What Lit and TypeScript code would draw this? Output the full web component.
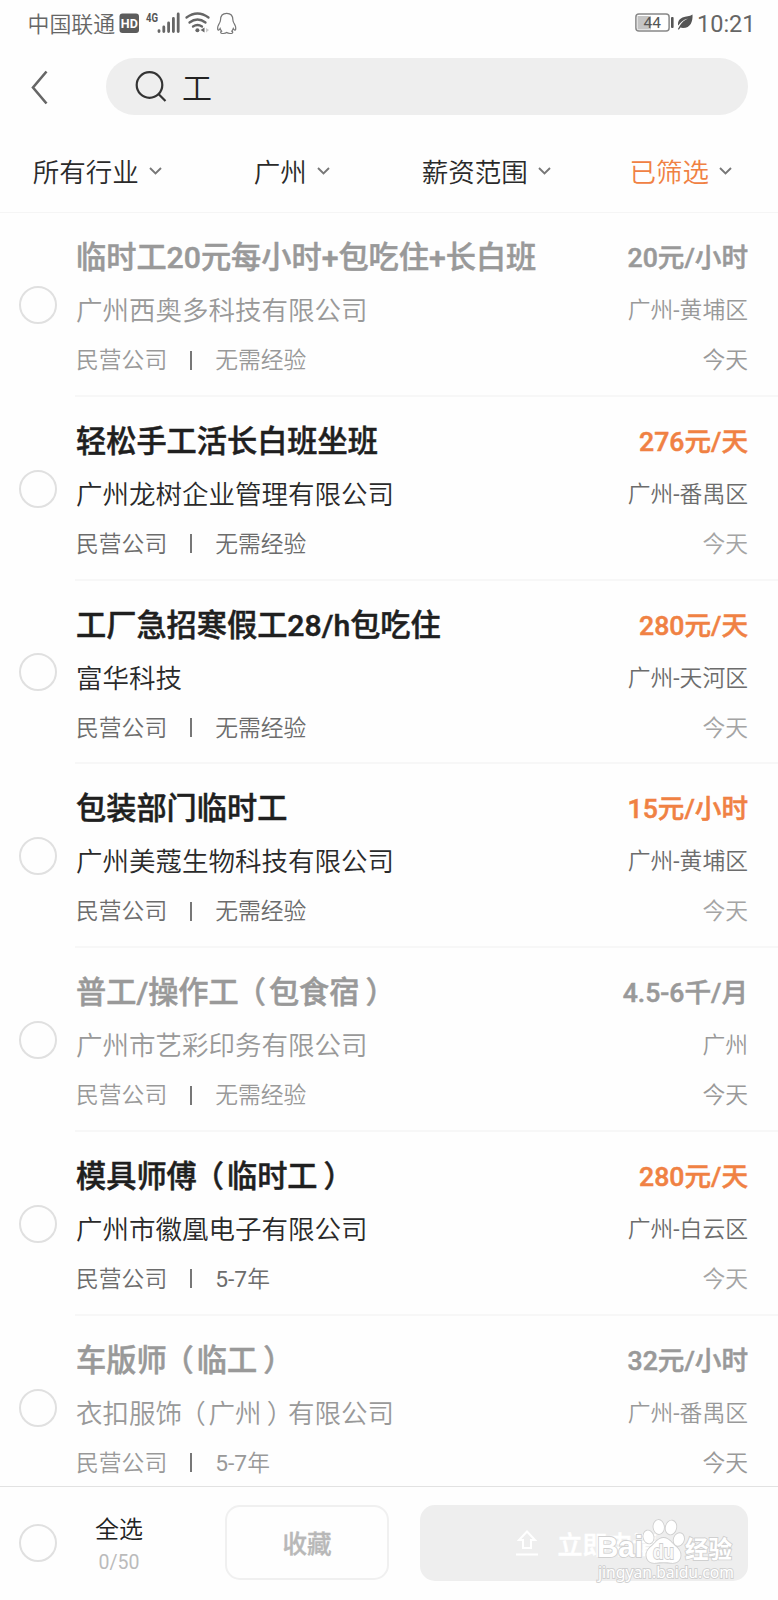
import { LitElement, html, svg, css } from "lit";
import { customElement, property } from "lit/decorators.js";
import { classMap } from "lit/directives/class-map.js";

interface Job {
  title: string;
  pay: string;
  company: string;
  area: string;
  kind: string;
  exp: string;
  viewed?: boolean;
}

const JOBS: Job[] = [
  { title: "临时工20元每小时+包吃住+长白班", pay: "20元/小时", company: "广州西奥多科技有限公司", area: "广州-黄埔区", kind: "民营公司", exp: "无需经验", viewed: true },
  { title: "轻松手工活长白班坐班", pay: "276元/天", company: "广州龙树企业管理有限公司", area: "广州-番禺区", kind: "民营公司", exp: "无需经验" },
  { title: "工厂急招寒假工28/h包吃住", pay: "280元/天", company: "富华科技", area: "广州-天河区", kind: "民营公司", exp: "无需经验" },
  { title: "包装部门临时工", pay: "15元/小时", company: "广州美蔻生物科技有限公司", area: "广州-黄埔区", kind: "民营公司", exp: "无需经验" },
  { title: "普工/操作工（包食宿）", pay: "4.5-6千/月", company: "广州市艺彩印务有限公司", area: "广州", kind: "民营公司", exp: "无需经验", viewed: true },
  { title: "模具师傅（临时工）", pay: "280元/天", company: "广州市徽凰电子有限公司", area: "广州-白云区", kind: "民营公司", exp: "5-7年" },
  { title: "车版师（临工）", pay: "32元/小时", company: "衣扣服饰（广州）有限公司", area: "广州-番禺区", kind: "民营公司", exp: "5-7年", viewed: true },
];

@customElement("status-bar")
class StatusBar extends LitElement {
  static styles = css`
    :host { display: flex; align-items: center; height: 47px; padding: 0 24px 0 27.5px; color: #666; box-sizing: border-box; }
    .carrier { font-size: 21.9px; line-height: 30px; font-weight: 350; width: 91.5px; padding-top: 2px; white-space: nowrap; }
    .icons { display: block; }
    .right { margin-left: auto; display: flex; align-items: center; }
    .time { font-size: 23.5px; line-height: 30px; width: 57px; margin-left: 4px; padding-top: 1px; white-space: nowrap; }
    .hd { font: 700 12.5px Roboto, sans-serif; fill: #fff; }
    .gen { font: 700 12px Roboto, sans-serif; fill: #555; }
    .num { font: 400 15.5px Roboto, sans-serif; fill: #555; }
  `;
  render() {
    return html`
      <span class="carrier">中国联通</span>
      <svg class="icons" width="120" height="47" viewBox="119 0 120 47">
        <rect x="119.5" y="13.5" width="19.5" height="19.5" rx="3" fill="#5c5c5c" />
        <text class="hd" x="120.8" y="27.8" textLength="17" lengthAdjust="spacingAndGlyphs">HD</text>
        <text class="gen" x="146" y="22" textLength="12" lengthAdjust="spacingAndGlyphs">4G</text>
        <g stroke="#666" stroke-width="2.8" stroke-linecap="round">
          <path d="M159 30.6v.9M163.8 27v4.5M168.6 23v8.5M173.4 18.5v13M178.2 14v17.5" />
        </g>
        <g fill="none" stroke="#666" stroke-width="2.3" stroke-linecap="round">
          <path d="M186.5 17.5Q197.5 9.5 208.5 17.5" />
          <path d="M189.5 22.5Q197.5 16.5 205.5 22.5" />
          <path d="M193 26.5Q197.5 23.5 202 26.5" />
        </g>
        <circle cx="197.4" cy="30.3" r="2" fill="#666" />
        <path d="M200.5 30l4-2.5v5z" fill="#666" />
        <path d="M206 28l3 2-3 2.5z" fill="#ccc" />
        <path d="M226.7 13.3c-4.3 0-6.2 3-6.2 6.7 0 1.2-.4 2-1 3-1.4 2.2-2.2 4.8-1.7 6.8.5.8 1.6 0 2.3-1.3.3 1 .8 1.9 1.5 2.6-1.3.7-1.3 2.1.3 2.3 2 .2 3.8 0 4.8-.9 1 .9 2.8 1.1 4.8.9 1.6-.2 1.6-1.6.3-2.3.7-.7 1.2-1.6 1.5-2.6.7 1.3 1.8 2.1 2.3 1.3.5-2-.3-4.6-1.7-6.8-.6-1-1-1.8-1-3 0-3.7-1.9-6.7-6.2-6.7z" fill="none" stroke="#777" stroke-width="1.2" />
      </svg>
      <span class="right">
        <svg class="icons" width="58" height="47" viewBox="635 0 58 47">
          <rect x="635.9" y="14" width="33.2" height="17" rx="3" fill="#fff" stroke="#888" stroke-width="1.5" />
          <rect x="637.5" y="16" width="13.5" height="13.5" fill="#c4c4c4" />
          <text class="num" x="643.6" y="28">44</text>
          <rect x="671" y="17" width="2.6" height="11" rx="1" fill="#555" />
          <path d="M692.5 14.5c.5 7-2 13.5-9.5 13.5-1 0-2-.2-2.6-.5l-1.6 2.2-.9-.6 2-3.5c2-3.6 4.8-5.6 8.1-7.2-4.6 1.2-7.5 3.5-9.7 7.2-.9-3.6.7-6.7 4.2-8.2 3.5-1.4 7-.7 10-2.9z" fill="#555" />
        </svg>
        <span class="time">10:21</span>
      </span>
    `;
  }
}

@customElement("job-row")
class JobRow extends LitElement {
  @property({ attribute: false }) job!: Job;
  static styles = css`
    :host { display: flex; height: 183.8px; flex: none; align-items: center; padding-left: 18.5px; box-sizing: border-box; }
    .check { flex: none; width: 38px; height: 38px; box-sizing: border-box; border: 2.5px solid #e0e0e0; border-radius: 50%; }
    .body { flex: 1; height: 100%; box-sizing: border-box; margin-left: 18.5px; padding: 23px 30px 0 1px; border-bottom: 2px solid #f7f7f7; }
    .line { display: flex; justify-content: space-between; white-space: nowrap; }
    .head { height: 44px; line-height: 44px; }
    .mid { height: 36px; line-height: 36px; margin-top: 13px; }
    .foot { height: 32px; line-height: 32px; margin-top: 16px; font-size: 22.8px; font-weight: 350; color: #6c6c6c; }
    .title { font-size: 30.2px; font-weight: 500; color: #1f1f1f; -webkit-text-stroke: 0.5px currentColor; }
    .pay { font-size: 26.6px; font-weight: 500; color: #f08143; -webkit-text-stroke: 0.5px currentColor; }
    .company { font-size: 26.5px; font-weight: 350; color: #2a2a2a; }
    .area { font-size: 22.8px; font-weight: 350; color: #6c6c6c; }
    .open { margin: 0 0.1em 0 -0.1em; }
    .close { margin: 0 -0.2em 0 0.2em; }
    .latin { font-weight: 400; }
    .day { color: #a4a4a4; }
    .meta { display: flex; align-items: center; }
    .bar { width: 1.5px; height: 19px; background: #777; margin: 0 23.5px 2px 23px; }
    .viewed .title, .viewed .pay, .viewed .company, .viewed .area, .viewed .foot, .viewed .day { color: #999; }
  `;
  private centred(text: string) {
    return text.split(/([（）])/).map((p) => {
      if (p === "（") return html`<span class="open">${p}</span>`;
      if (p === "）") return html`<span class="close">${p}</span>`;
      return p;
    });
  }
  private mixed(text: string) {
    return text.split(/([0-9-]+)/).map((p) => (/^[0-9-]+$/.test(p) ? html`<span class="latin">${p}</span>` : p));
  }
  render() {
    const j = this.job;
    return html`
      <span class="check"></span>
      <div class=${classMap({ body: true, viewed: !!j.viewed })}>
        <div class="line head"><span class="title">${this.centred(j.title)}</span><span class="pay">${j.pay}</span></div>
        <div class="line mid"><span class="company">${this.centred(j.company)}</span><span class="area">${this.mixed(j.area)}</span></div>
        <div class="line foot">
          <span class="meta"><span>${j.kind}</span><i class="bar"></i><span>${this.mixed(j.exp)}</span></span>
          <span class="day">今天</span>
        </div>
      </div>
    `;
  }
}

@customElement("app-root")
class AppRoot extends LitElement {
  static styles = css`
    :host { display: flex; flex-direction: column; width: 778px; height: 1600px; overflow: hidden; background: #fefefe; font-family: Roboto, "Noto Sans CJK SC", sans-serif; }
    .search { display: flex; align-items: center; flex: none; height: 79px; padding: 0 30px 0 29.5px; box-sizing: border-box; }
    .back { flex: none; width: 76px; height: 57px; }
    .field { flex: 1; display: flex; align-items: center; height: 57px; border-radius: 29px; background: #eee; padding-left: 28.5px; color: #222; }
    .glass { flex: none; margin-right: 14px; }
    .query { font-size: 30px; line-height: 40px; font-weight: 350; padding-top: 4px; }
    .filters { flex: none; display: grid; grid-template-columns: repeat(4, 1fr); height: 87px; border-bottom: 1.5px solid #f5f5f5; box-sizing: border-box; padding-top: 4px; }
    .filter { display: flex; align-items: center; justify-content: center; gap: 10px; height: 80px; font-size: 26.5px; font-weight: 350; color: #2a2a2a; }
    .arrow { display: block; padding-top: 1px; }
    .active { color: #f08143; }
    .list { flex: 1; min-height: 0; overflow: hidden; display: flex; flex-direction: column; }
    .bottom { flex: none; display: flex; align-items: center; height: 114px; box-sizing: border-box; border-top: 1px solid #e2e2e2; padding: 0 30px 2px 18.5px; }
    .check { flex: none; width: 38px; height: 38px; box-sizing: border-box; border: 2.5px solid #e0e0e0; border-radius: 50%; }
    .all { width: 125px; text-align: center; padding-top: 7px; }
    .label { font-size: 24px; line-height: 34px; font-weight: 350; color: #222; }
    .count { font-size: 19.5px; line-height: 32px; color: #bbb; }
    .save { flex: none; width: 164px; height: 75px; box-sizing: border-box; border: 2px solid #f0f0f0; border-radius: 15px; margin-left: 43.5px; display: flex; align-items: center; justify-content: center; font-size: 24.5px; font-weight: 500; color: #b8b8b8; -webkit-text-stroke: 0.4px currentColor; }
    .apply { position: relative; flex: 1; margin-left: 30.5px; height: 76px; border-radius: 15px; background: #eee; display: flex; align-items: center; padding-left: 95px; gap: 19px; color: #fff; font-size: 25px; font-weight: 500; -webkit-text-stroke: 0.5px currentColor; }
    .mark { position: absolute; left: 170px; top: 5px; -webkit-text-stroke: initial; }
    .brand { font: 700 30px "Liberation Sans", sans-serif; }
    .du { font: 700 21px "Liberation Sans", sans-serif; fill: #fafafa; stroke: #cfcfcf; stroke-width: 1.8; paint-order: stroke; }
    .cn { font: 700 24px "Noto Sans CJK SC", sans-serif; }
    .site { font: 400 16px "Noto Sans", sans-serif; }
    .outline { fill: #fff; stroke: #d0d0d0; stroke-width: 1.8; paint-order: stroke; }
  `;
  private filter(text: string, active = false) {
    return html`<div class=${classMap({ filter: true, active })}>
      <span>${text}</span>
      <svg class="arrow" width="13" height="10" viewBox="0 0 13 10"><path d="M1 2l5.5 5.5L12 2" fill="none" stroke="#777" stroke-width="1.9" /></svg>
    </div>`;
  }
  private watermark() {
    return svg`
      <g class="outline">
        <text class="brand" x="7" y="47" textLength="46" lengthAdjust="spacingAndGlyphs">Bai</text>
        <ellipse cx="58.5" cy="27" rx="5" ry="6.5" transform="rotate(-15 58.5 27)" />
        <ellipse cx="68.7" cy="17" rx="5.2" ry="7" transform="rotate(-5 68.7 17)" />
        <ellipse cx="81" cy="17.5" rx="5.2" ry="7" transform="rotate(12 81 17.5)" />
        <ellipse cx="88.8" cy="29.5" rx="5" ry="6.5" transform="rotate(20 88.8 29.5)" />
        <path d="M73.5 28c-5 0-7.500 4-10.500 7-3.500 3-7 6-6.500 11 .5 5.500 5 7.500 10 6.800 4-.6 10-.6 14 0 5 .7 9.500-1.300 10-6.800.5-5-3-8-6.500-11-3-3-5.500-7-10.500-7z" />
        <text class="cn" x="95" y="48" textLength="47" lengthAdjust="spacingAndGlyphs">经验</text>
        <text class="site" x="8" y="68" textLength="136" lengthAdjust="spacingAndGlyphs">jingyan.baidu.com</text>
      </g>
      <text class="du" x="63" y="49" textLength="21" lengthAdjust="spacingAndGlyphs">du</text>
    `;
  }
  render() {
    return html`
      <status-bar></status-bar>
      <div class="search">
        <svg class="back" viewBox="0 0 76 57"><path d="M16.5 13.5L3 29.5l13.5 16" fill="none" stroke="#666" stroke-width="2.6" /></svg>
        <div class="field">
          <svg class="glass" width="34" height="34" viewBox="0 0 34 34" fill="none" stroke="#333" stroke-width="2.2"><circle cx="15.5" cy="15" r="12.8" /><path d="M24.5 24l7 7" /></svg>
          <span class="query">工</span>
        </div>
      </div>
      <div class="filters">
        ${this.filter("所有行业")}${this.filter("广州")}${this.filter("薪资范围")}${this.filter("已筛选", true)}
      </div>
      <div class="list">${JOBS.map((j) => html`<job-row .job=${j}></job-row>`)}</div>
      <div class="bottom">
        <span class="check"></span>
        <div class="all"><div class="label">全选</div><div class="count">0/50</div></div>
        <div class="save">收藏</div>
        <div class="apply">
          <svg width="24" height="28" viewBox="0 0 24 28" fill="none" stroke="#fff" stroke-width="2"><path d="M12 2.5l8 8.5h-4v8H8v-8H4zM1 25.5h22" /></svg>
          <span>立即申请</span>
          <svg class="mark" width="158" height="76" viewBox="0 0 158 76">${this.watermark()}</svg>
        </div>
      </div>
    `;
  }
}
